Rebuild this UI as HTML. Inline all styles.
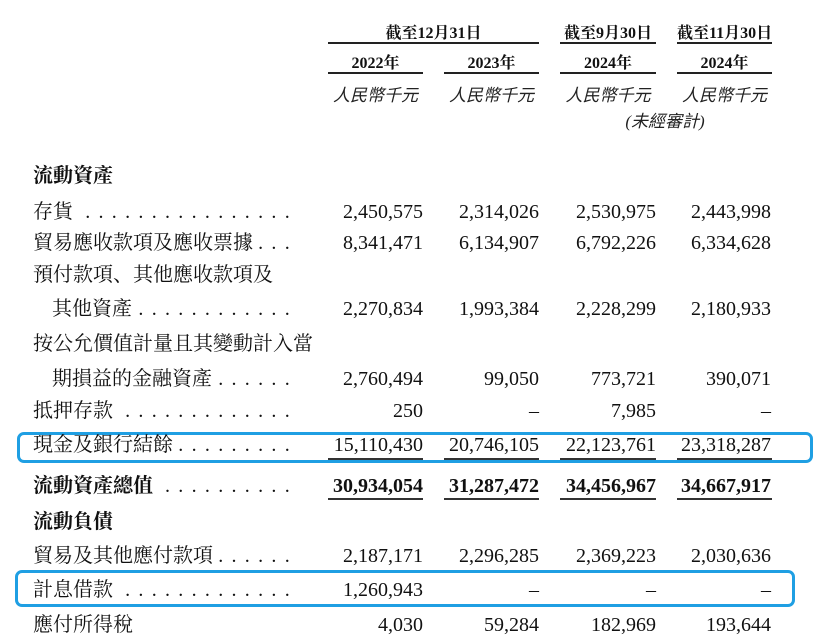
<!DOCTYPE html>
<html><head><meta charset="utf-8"><style>
body{margin:0;width:830px;height:634px;background:#fff;overflow:hidden;position:relative;font-family:"Liberation Serif","Noto Serif CJK SC",serif;color:#111}
.a{position:absolute;white-space:nowrap}
.h{font-weight:bold;font-size:16px;text-align:center}
.i{font-style:italic;font-size:17px;text-align:center;font-family:"Liberation Serif","Noto Sans CJK SC",serif;color:#222}
.ln{position:absolute;height:1.5px;background:#222}
.row{position:absolute;left:33px;width:265px;display:flex;font-size:20px;line-height:24px}
.row .d{flex:1;overflow:hidden;white-space:nowrap;direction:rtl;letter-spacing:8.3px;margin-left:4px}
.n{position:absolute;font-size:20px;line-height:24px;text-align:right;width:110px}
.b{font-weight:bold}
.box{position:absolute;border:3px solid #1f9fe3;border-radius:7px}
.u{position:absolute;height:1.5px;background:#333;width:95px}
</style></head><body>
<div class="a h" style="left:328px;width:211px;top:20px">截至12月31日</div>
<div class="a h" style="left:560px;width:96px;top:20px">截至9月30日</div>
<div class="a h" style="left:677px;width:95px;top:20px">截至11月30日</div>
<div class="ln" style="left:328px;width:211px;top:42px"></div>
<div class="ln" style="left:560px;width:96px;top:42px"></div>
<div class="ln" style="left:677px;width:95px;top:42px"></div>
<div class="a h" style="left:328px;width:95px;top:50px">2022年</div>
<div class="a h" style="left:444px;width:95px;top:50px">2023年</div>
<div class="a h" style="left:560px;width:96px;top:50px">2024年</div>
<div class="a h" style="left:677px;width:95px;top:50px">2024年</div>
<div class="ln" style="left:328px;width:95px;top:72px"></div>
<div class="ln" style="left:444px;width:95px;top:72px"></div>
<div class="ln" style="left:560px;width:96px;top:72px"></div>
<div class="ln" style="left:677px;width:95px;top:72px"></div>
<div class="a i" style="left:328px;width:95px;top:81px">人民幣千元</div>
<div class="a i" style="left:444px;width:95px;top:81px">人民幣千元</div>
<div class="a i" style="left:560px;width:96px;top:81px">人民幣千元</div>
<div class="a i" style="left:677px;width:95px;top:81px">人民幣千元</div>
<div class="a i" style="left:605px;width:120px;top:107px">(未經審計)</div>

<div class="row b" style="top:164px">流動資產</div>

<div class="row" style="top:200px"><span>存貨</span><span class="d">..............................</span></div>
<div class="n" style="left:313px;top:200px">2,450,575</div><div class="n" style="left:429px;top:200px">2,314,026</div><div class="n" style="left:546px;top:200px">2,530,975</div><div class="n" style="left:661px;top:200px">2,443,998</div>

<div class="row" style="top:231px"><span>貿易應收款項及應收票據</span><span class="d">..............................</span></div>
<div class="n" style="left:313px;top:231px">8,341,471</div><div class="n" style="left:429px;top:231px">6,134,907</div><div class="n" style="left:546px;top:231px">6,792,226</div><div class="n" style="left:661px;top:231px">6,334,628</div>

<div class="row" style="top:263px"><span>預付款項、其他應收款項及</span></div>
<div class="row" style="top:297px;left:52px;width:246px"><span>其他資產</span><span class="d">..............................</span></div>
<div class="n" style="left:313px;top:297px">2,270,834</div><div class="n" style="left:429px;top:297px">1,993,384</div><div class="n" style="left:546px;top:297px">2,228,299</div><div class="n" style="left:661px;top:297px">2,180,933</div>

<div class="row" style="top:332px;width:290px"><span>按公允價值計量且其變動計入當</span></div>
<div class="row" style="top:367px;left:52px;width:246px"><span>期損益的金融資產</span><span class="d">..............................</span></div>
<div class="n" style="left:313px;top:367px">2,760,494</div><div class="n" style="left:429px;top:367px">99,050</div><div class="n" style="left:546px;top:367px">773,721</div><div class="n" style="left:661px;top:367px">390,071</div>

<div class="row" style="top:399px"><span>抵押存款</span><span class="d">..............................</span></div>
<div class="n" style="left:313px;top:399px">250</div><div class="n" style="left:429px;top:399px">–</div><div class="n" style="left:546px;top:399px">7,985</div><div class="n" style="left:661px;top:399px">–</div>

<div class="box" style="left:17px;top:432px;width:790px;height:25px"></div>
<div class="row" style="top:433px"><span>現金及銀行結餘</span><span class="d">..............................</span></div>
<div class="n" style="left:313px;top:433px">15,110,430</div><div class="n" style="left:429px;top:433px">20,746,105</div><div class="n" style="left:546px;top:433px">22,123,761</div><div class="n" style="left:661px;top:433px">23,318,287</div>
<div class="u" style="left:328px;top:458px"></div><div class="u" style="left:444px;top:458px"></div><div class="u" style="left:560px;top:458px;width:96px"></div><div class="u" style="left:677px;top:458px"></div>

<div class="row b" style="top:474px"><span>流動資產總值</span><span class="d" style="font-weight:normal">..............................</span></div>
<div class="n b" style="left:313px;top:474px">30,934,054</div><div class="n b" style="left:429px;top:474px">31,287,472</div><div class="n b" style="left:546px;top:474px">34,456,967</div><div class="n b" style="left:661px;top:474px">34,667,917</div>
<div class="u" style="left:328px;top:498px"></div><div class="u" style="left:444px;top:498px"></div><div class="u" style="left:560px;top:498px;width:96px"></div><div class="u" style="left:677px;top:498px"></div>

<div class="row b" style="top:510px">流動負債</div>

<div class="row" style="top:544px"><span>貿易及其他應付款項</span><span class="d">..............................</span></div>
<div class="n" style="left:313px;top:544px">2,187,171</div><div class="n" style="left:429px;top:544px">2,296,285</div><div class="n" style="left:546px;top:544px">2,369,223</div><div class="n" style="left:661px;top:544px">2,030,636</div>

<div class="box" style="left:15px;top:570px;width:774px;height:31px"></div>
<div class="row" style="top:578px"><span>計息借款</span><span class="d">..............................</span></div>
<div class="n" style="left:313px;top:578px">1,260,943</div><div class="n" style="left:429px;top:578px">–</div><div class="n" style="left:546px;top:578px">–</div><div class="n" style="left:661px;top:578px">–</div>

<div class="row" style="top:613px"><span>應付所得稅</span></div>
<div class="n" style="left:313px;top:613px">4,030</div><div class="n" style="left:429px;top:613px">59,284</div><div class="n" style="left:546px;top:613px">182,969</div><div class="n" style="left:661px;top:613px">193,644</div>
</body></html>
